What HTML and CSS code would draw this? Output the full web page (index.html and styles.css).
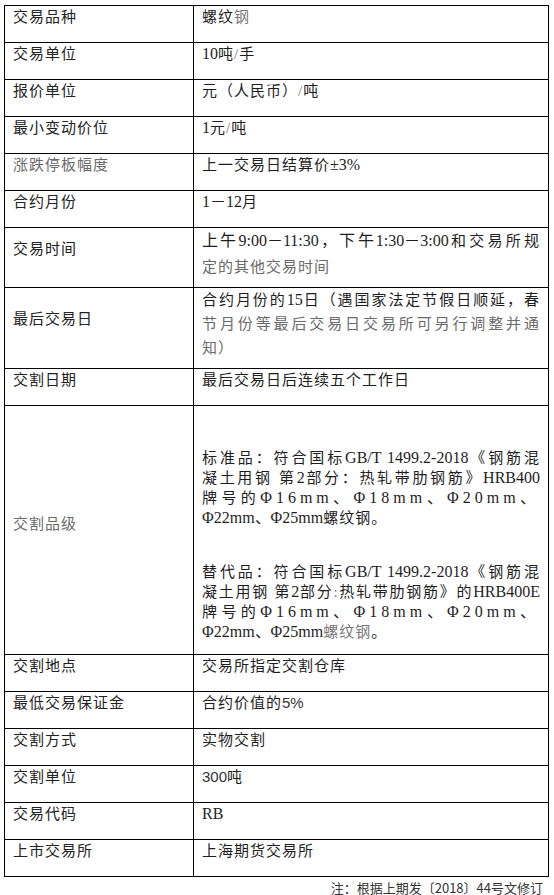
FILE: index.html
```html
<!DOCTYPE html>
<html lang="zh-CN">
<head>
<meta charset="utf-8">
<title>螺纹钢期货合约</title>
<link rel="stylesheet" href="styles.css">
</head>
<body>
<table class="spec">
  <colgroup><col class="c1"><col class="c2"></colgroup>
  <tr><td class="lbl">交易品种</td><td class="val">螺纹<span class="lt">钢</span></td></tr>
  <tr><td class="lbl">交易单位</td><td class="val"><span class="lat">10</span>吨<span class="lt">/</span>手</td></tr>
  <tr><td class="lbl">报价单位</td><td class="val">元（人民币）<span class="lt">/</span>吨</td></tr>
  <tr><td class="lbl">最小变动价位</td><td class="val"><span class="lat">1</span>元<span class="lt">/</span>吨</td></tr>
  <tr><td class="lbl grey spaced">涨跌停板幅度</td><td class="val">上一交易日结算价<span class="lat">±3%</span></td></tr>
  <tr><td class="lbl">合约月份</td><td class="val"><span class="lat">1－12</span>月</td></tr>
  <tr class="r7">
    <td class="lbl mid">交易时间</td>
    <td class="val multi">
      <span class="ln just"><span class="lat">上午9:00－11:30，下午1:30－3:00</span>和交易所规</span>
      <span class="ln grey">定的其他交易时间</span>
    </td>
  </tr>
  <tr class="r8">
    <td class="lbl mid">最后交易日</td>
    <td class="val multi">
      <span class="ln just">合约月份的<span class="lat">15</span>日（遇国家法定节假日顺延，春</span>
      <span class="ln just grey">节月份等最后交易日交易所可另行调整并通</span>
      <span class="ln grey">知）</span>
    </td>
  </tr>
  <tr><td class="lbl">交割日期</td><td class="val">最后交易日后连续五个工作日</td></tr>
  <tr class="r10">
    <td class="lbl grey spaced center">交割品级</td>
    <td class="val grade">
      <p class="para">
        <span class="ln just">标准品：符合国标<span class="lat">GB/T 1499.2-2018</span>《钢筋混</span>
        <span class="ln just">凝土用钢 第<span class="lat">2</span>部分：热轧带肋钢筋》<span class="lat">HRB400</span></span>
        <span class="ln just wide">牌号的<span class="lat">Φ16mm、Φ18mm、Φ20mm、</span></span>
        <span class="ln"><span class="lat">Φ22mm、Φ25mm</span>螺纹钢。</span>
      </p>
      <p class="para">
        <span class="ln just">替代品：符合国标<span class="lat">GB/T 1499.2-2018</span>《钢筋混</span>
        <span class="ln just">凝土用钢 第<span class="lat">2</span>部分<span class="lt">:</span>热轧带肋钢筋》的<span class="lat">HRB400E</span></span>
        <span class="ln just wide">牌号的<span class="lat">Φ16mm、Φ18mm、Φ20mm、</span></span>
        <span class="ln"><span class="lat">Φ22mm、Φ25mm</span><span class="lt">螺纹钢</span>。</span>
      </p>
    </td>
  </tr>
  <tr><td class="lbl">交割地点</td><td class="val">交易所指定交割仓库</td></tr>
  <tr><td class="lbl">最低交易保证金</td><td class="val">合约价值的<span class="sans">5%</span></td></tr>
  <tr><td class="lbl">交割方式</td><td class="val">实物交割</td></tr>
  <tr><td class="lbl">交割单位</td><td class="val"><span class="sans">300</span>吨</td></tr>
  <tr><td class="lbl">交易代码</td><td class="val"><span class="lat">RB</span></td></tr>
  <tr><td class="lbl">上市交易所</td><td class="val">上海期货交易所</td></tr>
</table>
<p class="note">注：根据上期发〔2018〕44号文修订</p>
</body>
</html>
```

FILE: styles.css
```css
html, body {
  margin: 0;
  padding: 0;
  background: #ffffff;
}

body {
  padding: 5px 0 0 4px;
  font-family: "Liberation Serif", "Noto Sans CJK SC", serif;
  color: #1e1e1e;
}

.spec {
  border-collapse: collapse;
  width: 545px;
  table-layout: fixed;
}

.c1 { width: 189px; }

.spec td {
  border: 1px solid #000;
  vertical-align: top;
  padding: 1px 8px 15px 8px;
  font-size: 15px;
  line-height: 20px;
  letter-spacing: 1px;
}

.spec td.val {
  padding-left: 8px;
  padding-right: 8px;
}

.lbl {
  color: #222;
}

.grey { color: #6a6a6a; }
.lt { color: #777; }
.spaced { letter-spacing: 2px; }

.lat {
  font-family: "Liberation Serif", serif;
  letter-spacing: 0;
  font-size: 16px;
}

.sans {
  font-family: "Liberation Sans", sans-serif;
  letter-spacing: 0;
  font-size: 15px;
  color: #333;
}

.ln {
  display: block;
}

.just {
  text-align: justify;
  text-align-last: justify;
}

.wide,
.wide .lat {
  letter-spacing: 4px;
}

.r7 td.val {
  line-height: 26px;
  padding-top: 0;
  padding-bottom: 7px;
}

.r7 td.lbl {
  padding-top: 11px;
}

.r8 td.val {
  line-height: 24px;
  padding-top: 0;
  padding-bottom: 8px;
}

.r8 td.lbl {
  padding-top: 21px;
}

.r10 td.lbl {
  vertical-align: middle;
  padding-bottom: 14px;
}

.grade {
  line-height: 22px;
}

.spec td.grade {
  padding-top: 42px;
  padding-bottom: 12px;
}

.para {
  margin: 0;
}

.para + .para {
  margin-top: 34px;
}

.note {
  margin: 4px 0 0 0;
  width: 539px;
  text-align: right;
  font-family: "Noto Sans CJK SC", "Liberation Sans", sans-serif;
  font-size: 13px;
  line-height: 14px;
  color: #333;
}
```
